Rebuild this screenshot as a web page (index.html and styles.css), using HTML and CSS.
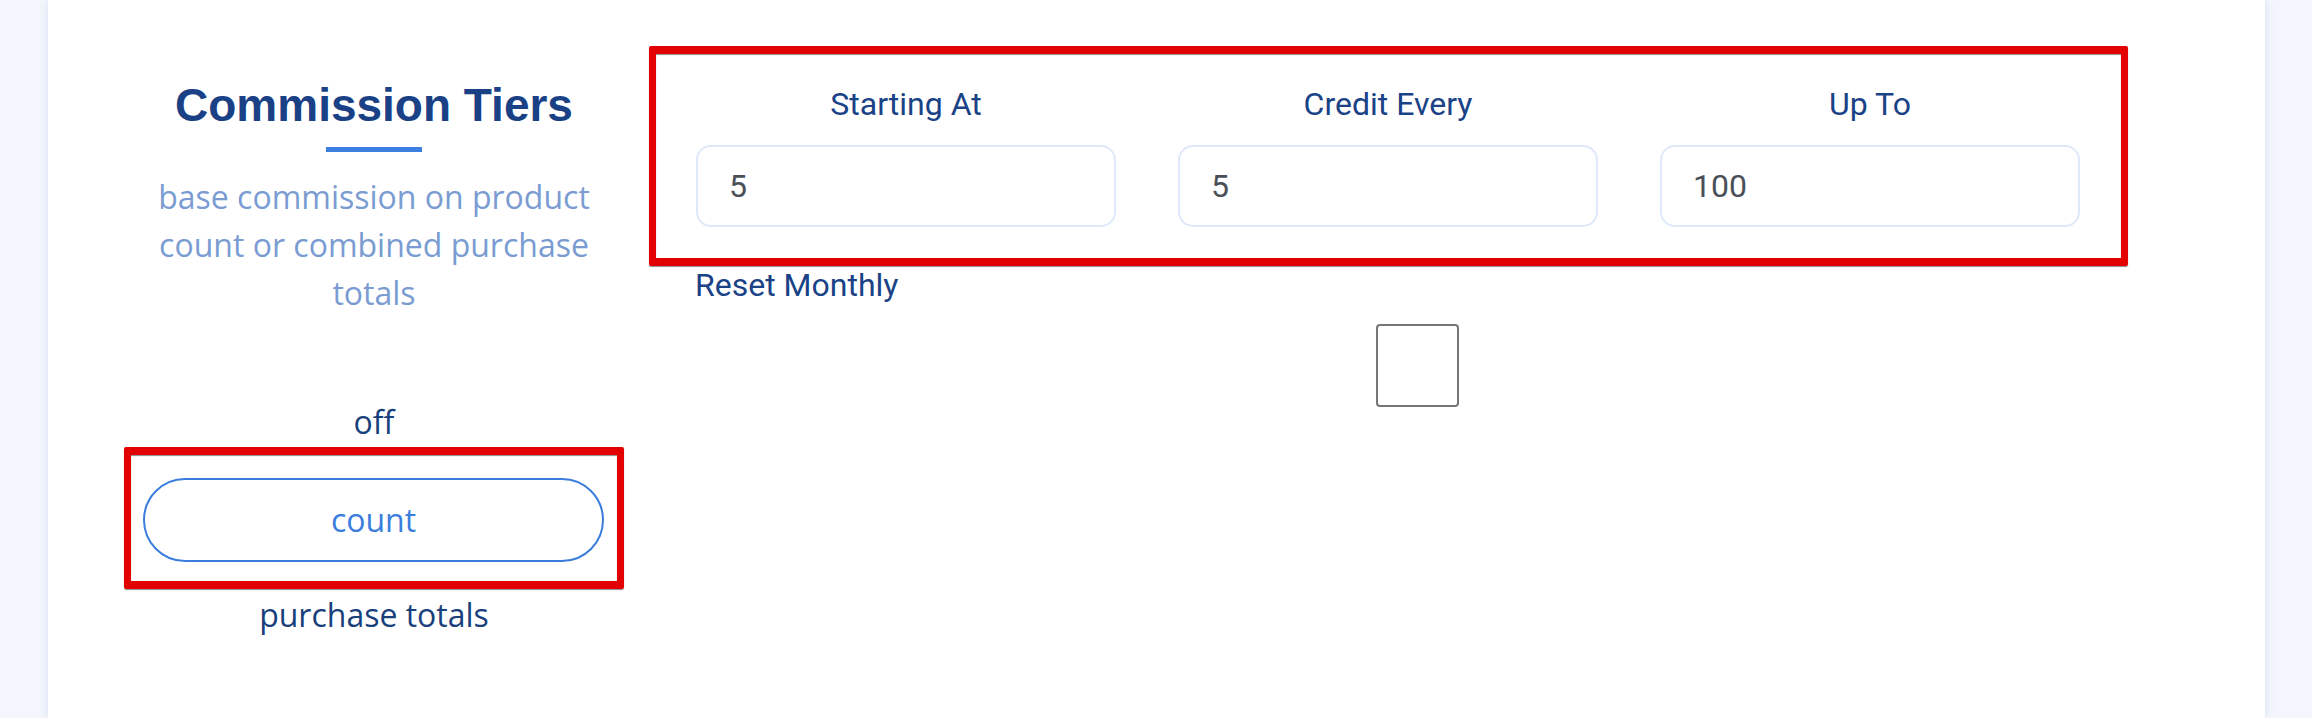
FILE: index.html
```html
<!DOCTYPE html>
<html lang="en">
<head>
<meta charset="utf-8">
<title>Commission Tiers</title>
<link rel="stylesheet" href="styles.css">
</head>
<body>
<main class="card">
  <section class="intro">
    <h2 class="intro-title">Commission Tiers</h2>
    <div class="intro-rule"></div>
    <p class="intro-desc">base commission on product count or combined purchase totals</p>
    <div class="mode-label">off</div>
    <div class="mode-box">
      <button class="mode-pill" type="button">count</button>
    </div>
    <div class="mode-label">purchase totals</div>
  </section>
  <section class="tiers">
    <div class="tier-box">
      <label class="field">
        <span class="field-label">Starting At</span>
        <input class="field-input" type="text" value="5">
      </label>
      <label class="field">
        <span class="field-label">Credit Every</span>
        <input class="field-input" type="text" value="5">
      </label>
      <label class="field">
        <span class="field-label">Up To</span>
        <input class="field-input" type="text" value="100">
      </label>
    </div>
    <div class="reset-label">Reset Monthly</div>
    <input class="reset-check" type="checkbox" aria-label="Reset Monthly">
  </section>
</main>
</body>
</html>
```
FILE: styles.css
```css
html, body {
  margin: 0;
  padding: 0;
}
body {
  background: #f3f6fc;
  height: 718px;
  overflow: hidden;
}
.card {
  margin-left: 48px;
  width: 2217px;
  min-height: 718px;
  box-sizing: border-box;
  background: #ffffff;
  box-shadow: 0 0 9px rgba(70, 110, 200, 0.16);
  display: flex;
  column-gap: 25px;
  padding: 0 79px 0 76px;
}
.intro {
  width: 500px;
  flex: none;
  display: flex;
  flex-direction: column;
  align-items: center;
  text-align: center;
  padding-top: 79px;
}
.intro-title {
  margin: 0;
  font-family: "Liberation Sans", Arial, sans-serif;
  font-weight: 700;
  font-size: 46px;
  line-height: 52px;
  color: #1a4185;
}
.intro-rule {
  width: 96px;
  height: 5px;
  margin-top: 16px;
  background: #3d7fe0;
}
.intro-desc {
  margin: 21px 0 0;
  width: 470px;
  font-family: "Open Sans", sans-serif;
  font-size: 32px;
  line-height: 48px;
  color: #7a9cd2;
}
.mode-label {
  font-family: "Open Sans", sans-serif;
  font-size: 32px;
  line-height: 48px;
  color: #193f7c;
  margin-top: 2px;
}
.intro-desc + .mode-label {
  margin-top: 81px;
}
.mode-box {
  margin-top: 1px;
  width: 500px;
  box-sizing: border-box;
  border: solid #e30000;
  border-width: 8px 7px;
  border-radius: 2px;
  padding: 23px 13px 19px 12px;
  box-shadow: 0 1px 1px rgba(0, 0, 0, 0.45), inset 0 1px 1px rgba(0, 0, 0, 0.45);
}
.mode-pill {
  display: block;
  width: 100%;
  height: 84px;
  box-sizing: border-box;
  margin: 0;
  padding: 0;
  border: 2px solid #3b7ddd;
  border-radius: 42px;
  background: #ffffff;
  font-family: "Open Sans", sans-serif;
  font-size: 32px;
  line-height: 80px;
  color: #3b7ddd;
  text-align: center;
}
.tiers {
  width: 1537px;
  flex: none;
  display: flex;
  flex-direction: column;
  padding-top: 46px;
}
.tier-box {
  width: 1479px;
  box-sizing: border-box;
  border: solid #e30000;
  border-width: 8px 7px;
  border-radius: 2px;
  padding: 31px 41px 31px 40px;
  display: grid;
  grid-template-columns: repeat(3, 420px);
  column-gap: 62px;
  box-shadow: 0 1px 1px rgba(0, 0, 0, 0.45), inset 0 1px 1px rgba(0, 0, 0, 0.45);
}
.field {
  display: flex;
  flex-direction: column;
  row-gap: 22px;
}
.field-label {
  font-family: Roboto, sans-serif;
  font-size: 32px;
  line-height: 38px;
  color: #1a4286;
  text-align: center;
}
.field-input {
  display: block;
  width: 420px;
  height: 82px;
  box-sizing: border-box;
  margin: 0;
  border: 2px solid #dfe8f8;
  border-radius: 15px;
  padding: 0 20px 0 31px;
  background: #ffffff;
  font-family: Roboto, sans-serif;
  font-size: 32px;
  color: #4a4f57;
  outline: none;
}
.reset-label {
  margin: 0 0 0 46px;
  font-family: Roboto, sans-serif;
  font-size: 32px;
  line-height: 38px;
  color: #1a4286;
}
.reset-check {
  appearance: none;
  -webkit-appearance: none;
  align-self: center;
  width: 83px;
  height: 83px;
  margin: 20px 0 0;
  box-sizing: border-box;
  border: 2px solid #767676;
  border-radius: 4px;
  background: #ffffff;
}
```
